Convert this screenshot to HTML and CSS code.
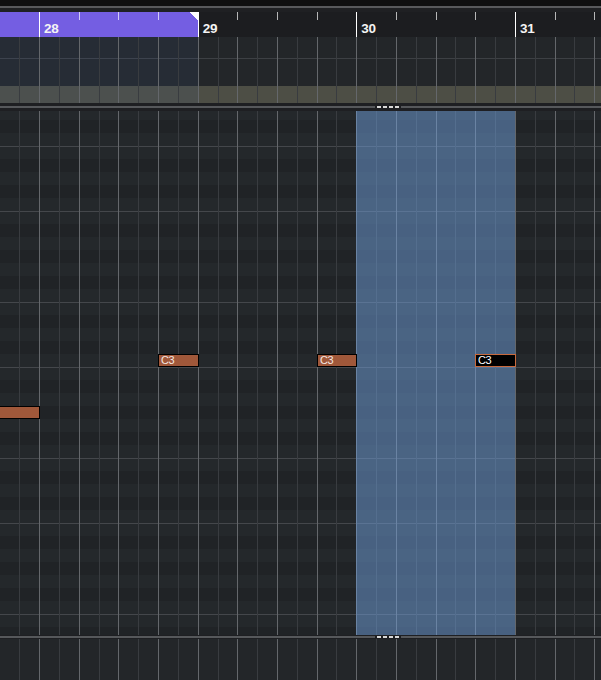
FILE: index.html
```html
<!DOCTYPE html>
<html>
<head>
<meta charset="utf-8">
<title>Key Editor</title>
<link rel="stylesheet" href="styles.css">
</head>
<body>
<div class="editor">
  <div class="topstrip"></div>

  <div class="ruler">
    <div class="ruler-grid">
      <div class="beat"></div>
      <div class="beat bar"><span>28</span></div>
      <div class="beat"></div>
      <div class="beat"></div>
      <div class="beat cycle-end"></div>
      <div class="beat bar"><span>29</span></div>
      <div class="beat"></div>
      <div class="beat"></div>
      <div class="beat"></div>
      <div class="beat bar"><span>30</span></div>
      <div class="beat"></div>
      <div class="beat"></div>
      <div class="beat"></div>
      <div class="beat bar"><span>31</span></div>
      <div class="beat"></div>
      <div class="beat"></div>
    </div>
  </div>

  <div class="lane upper">
    <div class="auto"></div>
    <div class="olive"></div>
    <div class="cycle-tint"></div>
    <div class="cols"><i></i><i></i><i></i><i></i><i></i><i></i><i></i><i></i><i></i><i></i><i></i><i></i><i></i><i></i><i></i><i></i><i></i><i></i><i></i><i></i><i></i><i></i><i></i><i></i><i></i><i></i><i></i><i></i><i></i><i></i><i></i></div>
  </div>

  <div class="split split-top">
    <div class="rail"><span class="grip"><i></i><i></i><i></i><i></i></span></div>
  </div>

  <div class="lane main">
    <div class="cols"><i></i><i></i><i></i><i></i><i></i><i></i><i></i><i></i><i></i><i></i><i></i><i></i><i></i><i></i><i></i><i></i><i></i><i></i><i></i><i></i><i></i><i></i><i></i><i></i><i></i><i></i><i></i><i></i><i></i><i></i><i></i></div>
    <div class="selection"></div>
    <div class="note" style="left:158px;top:243px;width:41px">C3</div>
    <div class="note" style="left:317px;top:243px;width:40px">C3</div>
    <div class="note selected" style="left:475px;top:243px;width:41px">C3</div>
    <div class="note" style="left:-2px;top:295px;width:42px"></div>
  </div>

  <div class="split split-bottom">
    <div class="rail"><span class="grip"><i></i><i></i><i></i><i></i></span></div>
  </div>

  <div class="lane lower">
    <div class="cols"><i></i><i></i><i></i><i></i><i></i><i></i><i></i><i></i><i></i><i></i><i></i><i></i><i></i><i></i><i></i><i></i><i></i><i></i><i></i><i></i><i></i><i></i><i></i><i></i><i></i><i></i><i></i><i></i><i></i><i></i><i></i></div>
  </div>
</div>
</body>
</html>
```

FILE: styles.css
```css
* {
  box-sizing: border-box;
  margin: 0;
  padding: 0;
}

html, body {
  width: 601px;
  height: 680px;
  overflow: hidden;
  background: #232629;
}

body {
  font-family: "Liberation Sans", Arial, sans-serif;
}

.editor {
  display: flex;
  flex-direction: column;
  height: 680px;
}

.topstrip {
  flex: none;
  height: 12px;
  background: linear-gradient(#0f0f10 0 6px, #58595c 6px 8px, #1f2023 8px 12px);
}

/* ---------- ruler ---------- */
.ruler {
  flex: none;
  height: 25px;
  overflow: hidden;
  background: linear-gradient(to right, #745ee2 0 198px, #1c1d20 198px);
}

.ruler-grid {
  display: grid;
  grid-template-columns: repeat(16, 39.67px);
  height: 100%;
  margin-left: -0.6px;
}

.beat {
  background: linear-gradient(rgba(255,255,255,.68), rgba(255,255,255,.68)) no-repeat 0 0 / 1px 8px;
}

.beat.cycle-end {
  background:
    linear-gradient(rgba(255,255,255,.68), rgba(255,255,255,.68)) no-repeat 0 0 / 1px 8px,
    linear-gradient(to bottom left, #ffffff 50%, transparent 50%) no-repeat 100% 0 / 8px 8px;
}

.beat.bar {
  background: none;
  border-left: 1px solid #ffffff;
}

.bar span {
  display: block;
  padding: 10px 0 0 4px;
  font-size: 13.5px;
  font-weight: 700;
  line-height: 13px;
  letter-spacing: -0.3px;
  color: #f4f4f4;
}

/* ---------- lanes ---------- */
.lane {
  position: relative;
  flex: none;
  overflow: hidden;
}

.cols {
  position: absolute;
  top: 0;
  bottom: 0;
  left: -0.6px;
  display: grid;
  grid-template-columns: repeat(31, 19.835px);
}

.cols i {
  border-left: 1px solid #393c40;
}

.cols i:nth-child(odd) {
  border-left-color: #64676b;
}

.upper {
  height: 66px;
  display: flex;
  flex-direction: column;
}

.auto {
  height: 49px;
  background: linear-gradient(transparent 0 21px, #3d4044 21px 22px, transparent 22px) #232629;
}

.olive {
  height: 17px;
  width: 100%;
  background: #4d4e45;
}

.cycle-tint {
  position: absolute;
  left: 0;
  top: 0;
  bottom: 0;
  width: 198px;
  background: rgba(65, 98, 162, 0.1);
}

/* ---------- splitters ---------- */
.split {
  flex: none;
  padding: 3px 0;
  background: #1e1f22;
}

.split-bottom {
  padding: 1px 0;
}

.rail {
  display: flex;
  height: 2px;
  background: #56585b;
}

.grip {
  display: flex;
  gap: 2px;
  margin-left: 375px;
  padding: 0 2px;
  background: #1e1f22;
}

.grip i {
  width: 4px;
  background: #d8d8d8;
}

/* ---------- note grid ---------- */
.main {
  height: 524px;
  background:
    linear-gradient(
      #44474b 0 1px,
      #24282b 1px 13px,
      #202326 13px 26px,
      #24282b 26px 39px,
      #202326 39px 52px,
      #24282b 52px 65px,
      #202326 65px 78px,
      #24282b 78px 91px,
      #44474b 91px 92px,
      #24282b 92px 104px,
      #202326 104px 117px,
      #24282b 117px 130px,
      #202326 130px 143px,
      #24282b 143px 156px
    ) 0 100px / 100% 156px repeat-y;
}

.selection {
  position: absolute;
  left: 356px;
  top: 0;
  bottom: 0;
  width: 159px;
  background: rgba(112, 160, 220, 0.5);
}

.note {
  position: absolute;
  height: 13px;
  padding-left: 2px;
  border: 1px solid #000000;
  background: #a0583a;
  color: #f3e7e1;
  font-size: 11px;
  line-height: 11px;
  letter-spacing: -0.4px;
  white-space: nowrap;
  overflow: hidden;
}

.note.selected {
  background: #000000;
  border-color: #c8693d;
  color: #ffffff;
}

.lower {
  flex: 1;
}
```
